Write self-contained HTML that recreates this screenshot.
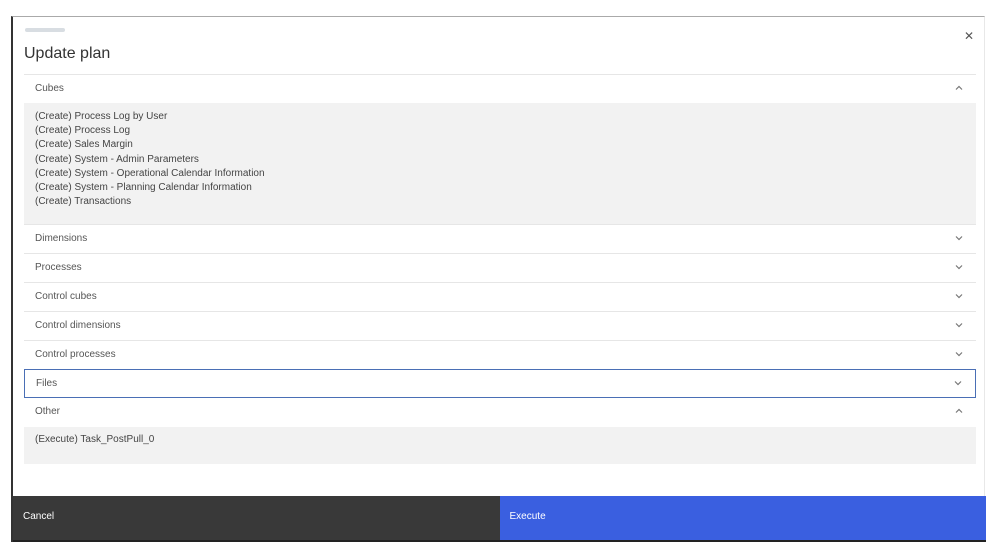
<!DOCTYPE html>
<html><head><meta charset="utf-8"><style>
*{box-sizing:border-box;margin:0;padding:0}
body{width:998px;height:558px;background:#fff;font-family:"Liberation Sans",sans-serif;position:relative;overflow:hidden}
.modal{position:absolute;left:11px;top:16px;width:974px;height:526px;border-left:2px solid #333;border-top:1px solid #aaa;border-right:1px solid #e8e8e8;background:#fff}
.lbl{position:absolute;left:12px;top:11px;width:40px;height:4px;background:#d8dde2;border-radius:2px}
.title{position:absolute;left:11px;top:28px;font-size:16px;color:#333}
.x{position:absolute;left:951px;top:12px;font-size:12px;color:#555}
.acc{position:absolute;left:11px;top:57px;width:952px}
.row{height:29px;border-top:1px solid #e6e6e6;position:relative;font-size:10px;color:#555;padding:8px 0 0 11px}
.row .ch{position:absolute;right:12px;top:8px;width:10px;height:10px}
.body{background:#f2f2f2;padding:7px 11px 0;font-size:10px;color:#444;line-height:14.2px}
.files{border:1px solid #4a6fb5}
.btns{position:absolute;left:0;top:479px;width:973px;height:46px;display:flex;border-bottom:2px solid #222}
.btns div{flex:1;font-size:10px;color:#fff;padding:15px 0 0 10px}
</style></head><body>
<div class="modal">
<div class="lbl"></div>
<div class="title">Update plan</div>
<div class="x">✕</div>
<div class="acc">
<div class="row">Cubes<svg class="ch" viewBox="0 0 10 10"><path d="M2 6.5L5 3.5L8 6.5" stroke="#777" fill="none" stroke-width="1.2"/></svg></div>
<div class="body" style="height:121px">(Create) Process Log by User<br>(Create) Process Log<br>(Create) Sales Margin<br>(Create) System - Admin Parameters<br>(Create) System - Operational Calendar Information<br>(Create) System - Planning Calendar Information<br>(Create) Transactions</div>
<div class="row">Dimensions<svg class="ch" viewBox="0 0 10 10"><path d="M2 3.5L5 6.5L8 3.5" stroke="#777" fill="none" stroke-width="1.2"/></svg></div>
<div class="row">Processes<svg class="ch" viewBox="0 0 10 10"><path d="M2 3.5L5 6.5L8 3.5" stroke="#777" fill="none" stroke-width="1.2"/></svg></div>
<div class="row">Control cubes<svg class="ch" viewBox="0 0 10 10"><path d="M2 3.5L5 6.5L8 3.5" stroke="#777" fill="none" stroke-width="1.2"/></svg></div>
<div class="row">Control dimensions<svg class="ch" viewBox="0 0 10 10"><path d="M2 3.5L5 6.5L8 3.5" stroke="#777" fill="none" stroke-width="1.2"/></svg></div>
<div class="row">Control processes<svg class="ch" viewBox="0 0 10 10"><path d="M2 3.5L5 6.5L8 3.5" stroke="#777" fill="none" stroke-width="1.2"/></svg></div>
<div class="row files">Files<svg class="ch" viewBox="0 0 10 10"><path d="M2 3.5L5 6.5L8 3.5" stroke="#777" fill="none" stroke-width="1.2"/></svg></div>
<div class="row" style="border-top:none">Other<svg class="ch" viewBox="0 0 10 10"><path d="M2 6.5L5 3.5L8 6.5" stroke="#777" fill="none" stroke-width="1.2"/></svg></div>
<div class="body" style="height:37px;padding-top:6px">(Execute) Task_PostPull_0</div>
</div>
<div class="btns"><div style="background:#393939">Cancel</div><div style="background:#3a5fe0">Execute</div></div>
</div>
</body></html>
